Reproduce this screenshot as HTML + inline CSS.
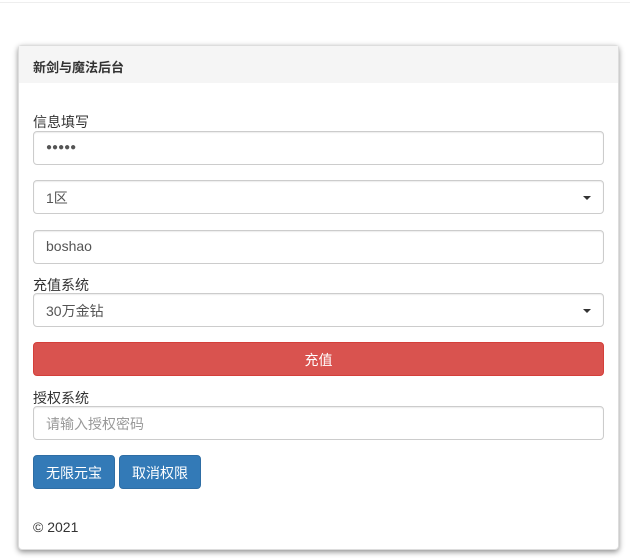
<!DOCTYPE html>
<html><head><meta charset="utf-8"><style>
*{box-sizing:border-box}
body{margin:0;width:630px;height:558px;background:#fff;font-family:"Liberation Sans","Noto Sans CJK SC",sans-serif;font-size:14px;color:#333;position:relative;overflow:hidden}
.top{position:absolute;left:0;top:0;width:630px;height:3px;border-bottom:1px solid #eee}
.card{position:absolute;left:18px;top:45px;width:601px;height:505px;border:1px solid #ddd;border-radius:4px;box-shadow:0 2px 6px rgba(0,0,0,.45);background:#fff}
.hd{height:37px;background:#f5f5f5;padding:11px 14px;font-size:13px;font-weight:bold;color:#333}
.a{position:absolute;left:14px;width:571px;white-space:nowrap}
.inp{height:34px;border:1px solid #ccc;border-radius:4px;box-shadow:inset 0 1px 1px rgba(0,0,0,.075);padding:7px 12px;font-size:14px;color:#555}
.lbl{font-size:14px;color:#333;line-height:16px}
.caret{position:absolute;right:12px;top:15px;width:0;height:0;border-left:4px solid transparent;border-right:4px solid transparent;border-top:4px solid #333}
.red{height:34px;background:#d9534f;border:1px solid #d43f3a;border-radius:4px;color:#fff;text-align:center;padding-top:7px}
.btn{position:absolute;top:409px;height:34px;background:#337ab7;border:1px solid #2e6da4;border-radius:4px;color:#fff;padding:7px 0;text-align:center;white-space:nowrap;font-size:14px}
</style></head><body>
<div class="top"></div>
<div class="card">
<div class="hd">新剑与魔法后台</div>
<div class="a lbl" style="top:68px">信息填写</div>
<div class="a inp" style="top:85px;font-size:10px;padding-top:10px">●●●●●</div>
<div class="a inp" style="top:134px">1区<span class="caret"></span></div>
<div class="a inp" style="top:184px">boshao</div>
<div class="a lbl" style="top:231px">充值系统</div>
<div class="a inp" style="top:247px">30万金钻<span class="caret"></span></div>
<div class="a red" style="top:296px">充值</div>
<div class="a lbl" style="top:344px">授权系统</div>
<div class="a inp" style="top:360px;color:#999">请输入授权密码</div>
<div class="btn" style="left:14px;width:82px">无限元宝</div>
<div class="btn" style="left:100px;width:82px">取消权限</div>
<div class="a" style="top:473px">© 2021</div>
</div>
</body></html>
